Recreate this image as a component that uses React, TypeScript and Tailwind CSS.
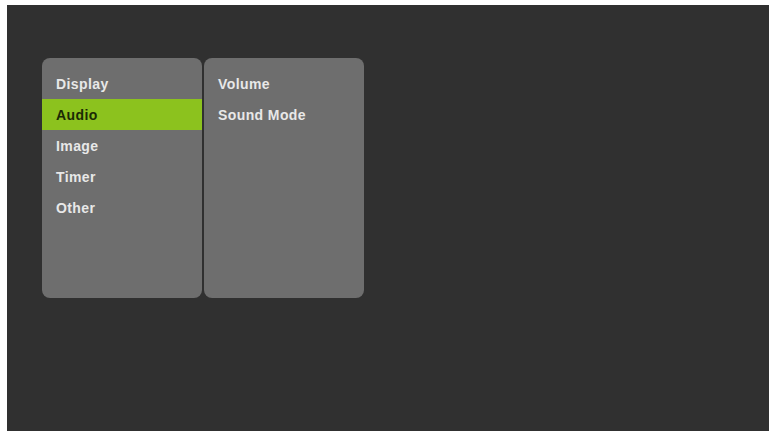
import React from "react";

const left = ["Display", "Audio", "Image", "Timer", "Other"];
const right = ["Volume", "Sound Mode"];

export default function App() {
  return (
    <div className="w-[774px] h-[434px] bg-white pt-[5px] pl-[7px] overflow-hidden">
      <div
        className="w-[762px] h-[426px] bg-[#303030] pl-[35px] pt-[53px]"
        style={{ fontFamily: '"Liberation Sans", Arial, sans-serif' }}
      >
        <div className="flex gap-[2px]">
          <div className="w-[160px] h-[240px] rounded-[8px] bg-[#6e6e6e] pt-[10px] overflow-hidden">
            {left.map((t) => (
              <div
                key={t}
                className={
                  t === "Audio"
                    ? "h-[31px] flex items-center pl-[14px] pt-[2px] bg-[#8cc21e] text-[#1b2a05] text-[14px] font-bold tracking-[0.4px]"
                    : "h-[31px] flex items-center pl-[14px] pt-[2px] text-[#e8e8e8] text-[14px] font-bold tracking-[0.4px]"
                }
              >
                {t}
              </div>
            ))}
          </div>
          <div className="w-[160px] h-[240px] rounded-[8px] bg-[#6e6e6e] pt-[10px] overflow-hidden">
            {right.map((t) => (
              <div
                key={t}
                className="h-[31px] flex items-center pl-[14px] pt-[2px] text-[#e8e8e8] text-[14px] font-bold tracking-[0.4px]"
              >
                {t}
              </div>
            ))}
          </div>
        </div>
      </div>
    </div>
  );
}
